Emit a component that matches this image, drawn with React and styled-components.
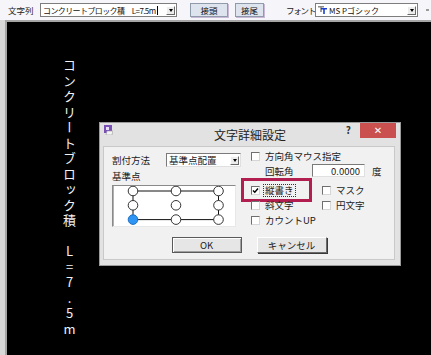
import React from "react";
import styled, { createGlobalStyle } from "styled-components";

const GlobalStyle = createGlobalStyle`
  html, body {
    margin: 0;
    padding: 0;
    background: #000;
  }
  body {
    width: 431px;
    height: 355px;
    overflow: hidden;
    font-family: "Noto Sans CJK JP", "Noto Sans", sans-serif;
  }
  #root {
    width: 431px;
    height: 355px;
  }
`;

const Page = styled.div`
  width: 431px;
  height: 355px;
  display: flex;
  flex-direction: column;
`;

// top toolbar
const Toolbar = styled.div`
  height: 20px;
  flex: none;
  display: flex;
  align-items: center;
  padding-left: 8px;
  background: #f6f6fa;
  color: #222;
  font-size: 8.5px;
`;

const ToolLabel = styled.span`
  width: ${(p) => p.$w}px;
  margin-left: ${(p) => p.$ml || 0}px;
  flex: none;
  white-space: nowrap;
  line-height: 14px;
  letter-spacing: ${(p) => p.$ls || 0}px;
`;

const Combo = styled.div`
  width: ${(p) => p.$w}px;
  height: 14px;
  flex: none;
  box-sizing: border-box;
  display: flex;
  align-items: center;
  padding-left: 2px;
  background: #fff;
  border: 1px solid #7d7d7d;
  font-size: 8px;
  letter-spacing: ${(p) => p.$ls || 0}px;
  color: #111;
  white-space: nowrap;
  overflow: hidden;
`;

const Caret = styled.span`
  width: 1px;
  height: 9px;
  background: #000;
  margin-left: 1px;
`;

const ArrowBtn = styled.span`
  margin-left: auto;
  margin-right: 1px;
  width: 9px;
  height: 9px;
  flex: none;
  box-sizing: border-box;
  display: flex;
  align-items: center;
  justify-content: center;
  background: #ececec;
  border: 1px solid;
  border-color: #fff #6a6a6a #6a6a6a #fff;

  &::after {
    content: "";
    border-left: 2.5px solid transparent;
    border-right: 2.5px solid transparent;
    border-top: 3px solid #000;
  }
`;

const ToolButton = styled.button`
  width: ${(p) => p.$w}px;
  height: 14px;
  margin-left: ${(p) => p.$ml}px;
  flex: none;
  padding: 0;
  background: #dde4ee;
  border: 1px solid #8f9aab;
  box-shadow: 1px 1px 0 #c9b9d6;
  font-family: inherit;
  font-size: 8.5px;
  color: #111;
  line-height: 12px;
`;

const FontIcon = styled.svg`
  width: 9px;
  height: 8px;
  flex: none;
  margin-right: 2px;
`;

const EdgeMark = styled.span`
  margin-left: 8px;
  width: 3px;
  height: 2px;
  background: #9a9a9a;
`;

// drawing area
const Workspace = styled.div`
  flex: 1;
  display: flex;
`;

const LeftStrip = styled.div`
  width: 5px;
  flex: none;
  background: #d8d8d8;
  border-right: 2px solid #a6a6a6;
`;

const Board = styled.div`
  flex: 1;
  position: relative;
  background: #000;
  border-top: 2px solid #a6a6a6;
  overflow: hidden;
`;

const VerticalText = styled.div`
  position: absolute;
  left: 55px;
  top: 37px;
  writing-mode: vertical-rl;
  text-orientation: upright;
  font-size: 13px;
  line-height: 14px;
  letter-spacing: 2.5px;
  color: #f2f2f2;
  white-space: nowrap;
`;

// dialog window
const Dialog = styled.div`
  position: absolute;
  left: 92px;
  top: 100px;
  width: 302px;
  height: 144px;
  box-sizing: border-box;
  display: flex;
  flex-direction: column;
  background: #e2e2e2;
  border: 1px solid #9b9b9b;
  color: #1a1a1a;
`;

const TitleBar = styled.div`
  height: 23px;
  flex: none;
  display: grid;
  grid-template-columns: 1fr auto 1fr;
  align-items: start;
`;

const AppIcon = styled.svg`
  width: 9px;
  height: 10px;
  margin: 2px 0 0 4px;
`;

const Title = styled.div`
  font-size: 12px;
  line-height: 23px;
  color: #222;
`;

const TitleButtons = styled.div`
  display: flex;
  justify-content: flex-end;
  align-items: flex-start;
`;

const Help = styled.span`
  margin: 1px 9px 0 0;
  font-size: 10px;
  font-weight: bold;
  line-height: 12px;
  color: #333;
`;

const CloseBtn = styled.div`
  width: 36px;
  height: 15px;
  margin-right: 4px;
  display: flex;
  align-items: center;
  justify-content: center;
  background: #c9504f;
  color: #fff;
  font-size: 10px;
  font-family: "DejaVu Sans", sans-serif;
`;

const Panel = styled.div`
  flex: 1;
  margin: 0 5px 5px 3px;
  padding: 6px 0 0 8px;
  box-sizing: border-box;
  background: #f1f1f1;
  border: 1px solid #c9c9c9;
  font-size: 9.5px;
  display: flex;
  flex-direction: column;
`;

const Columns = styled.div`
  display: flex;
  gap: 9px;
`;

const LeftCol = styled.div`
  width: 130px;
  display: flex;
  flex-direction: column;
`;

const FieldRow = styled.div`
  height: 14px;
  display: flex;
  align-items: center;
`;

const FieldLabel = styled.span`
  width: ${(p) => p.$w}px;
  flex: none;
  white-space: nowrap;
`;

const Select = styled.div`
  width: 75px;
  height: 14px;
  box-sizing: border-box;
  display: flex;
  align-items: center;
  padding-left: 2px;
  background: #fff;
  border: 1px solid;
  border-color: #7a7a7a #e0e0e0 #e0e0e0 #7a7a7a;
  white-space: nowrap;
`;

const GroupLabel = styled.div`
  margin-top: 4px;
  height: 10px;
  line-height: 10px;
`;

const PointBox = styled.div`
  margin-top: 4px;
  width: 124px;
  height: 42px;
  box-sizing: border-box;
  background: #fff;
  border: 1px solid;
  border-color: #8a8a8a #e8e8e8 #e8e8e8 #8a8a8a;
  box-shadow: inset 1px 0 0 #b0b0b0;
  display: flex;
`;

const RightCol = styled.div`
  display: flex;
  flex-direction: column;
  margin-top: -3px;
`;

const CheckItem = styled.label`
  position: relative;
  height: ${(p) => p.$h || 12}px;
  display: flex;
  align-items: center;
  gap: 3px;
  white-space: nowrap;
`;

const Box = styled.span`
  width: 9px;
  height: 9px;
  flex: none;
  box-sizing: border-box;
  background: #fff;
  border: 1px solid;
  border-color: #6f6f6f #d6d6d6 #d6d6d6 #6f6f6f;
  display: flex;
  align-items: center;
  justify-content: center;
`;

const CheckText = styled.span`
  padding: 0 1px;
  line-height: 11px;
  border: 1px ${(p) => (p.$focus ? "dotted #333" : "solid transparent")};
`;

const Marker = styled.span`
  position: absolute;
  left: -10px;
  top: -5.5px;
  width: 71px;
  height: 24px;
  box-sizing: border-box;
  border: 3px solid #b21e4f;
  pointer-events: none;
`;

const AngleRow = styled.div`
  margin-top: 2px;
  height: 13px;
  padding-left: 14px;
  display: flex;
  align-items: center;
`;

const NumInput = styled.div`
  width: 53px;
  height: 13px;
  box-sizing: border-box;
  padding-right: 4px;
  display: flex;
  align-items: center;
  justify-content: flex-end;
  background: #fff;
  border: 1px solid;
  border-color: #7a7a7a #e0e0e0 #e0e0e0 #7a7a7a;
`;

const Unit = styled.span`
  margin-left: 7px;
`;

const OptionGrid = styled.div`
  margin-top: 6px;
  display: grid;
  grid-template-columns: 71px auto;
  grid-auto-rows: 15px;
  align-items: center;
`;

const ButtonRow = styled.div`
  margin-top: 9px;
  display: flex;
  justify-content: center;
  gap: 15px;
  padding-right: 8px;
`;

const DlgButton = styled.button`
  width: 70px;
  height: 16px;
  padding: 0;
  box-sizing: border-box;
  background: #e6e6e6;
  border: 1px solid;
  border-color: ${(p) =>
    p.$default ? "#5a5a5a" : "#ffffff #6a6a6a #6a6a6a #ffffff"};
  box-shadow: ${(p) =>
    p.$default ? "inset 1px 1px 0 #fff, inset -1px -1px 0 #a0a0a0" : "1px 1px 0 #3a3a3a"};
  font-family: inherit;
  font-size: 9.5px;
  color: #1a1a1a;
  line-height: 14px;
`;

const Check = ({ label, checked, focus, children }) => (
  <CheckItem $h={focus !== undefined || checked !== undefined ? 15 : 12}>
    <Box>
      {checked && (
        <svg width="7" height="7" viewBox="0 0 7 7">
          <polyline points="1,3.5 2.8,5.3 6,1.5" fill="none" stroke="#000" strokeWidth="1.4" />
        </svg>
      )}
    </Box>
    <CheckText $focus={focus}>{label}</CheckText>
    {children}
  </CheckItem>
);

const cols = [20, 63, 105.5];
const rows = [5, 19.3, 33.6];

const BasePoints = () => (
  <svg width="122" height="40" viewBox="0 0 122 40">
    <rect x="20" y="5" width="85.5" height="28.6" fill="none" stroke="#111" strokeWidth="1" />
    {rows.map((y, r) =>
      cols.map((x, c) => {
        const on = r === 2 && c === 0;
        return (
          <circle
            key={`${r}-${c}`}
            cx={x}
            cy={y}
            r="4.8"
            fill={on ? "#2f95f5" : "#fff"}
            stroke={on ? "#1f6fc2" : "#333"}
            strokeWidth="1"
          />
        );
      })
    )}
  </svg>
);

const App = () => {
  return (
    <Page>
      <GlobalStyle />
      <Toolbar>
        <ToolLabel $w={32}>文字列</ToolLabel>
        <Combo $w={137} $ls={-0.6}>
          コンクリートブロック積　L=7.5m
          <Caret />
          <ArrowBtn />
        </Combo>
        <ToolButton $w={38} $ml={13}>接頭</ToolButton>
        <ToolButton $w={29} $ml={7}>接尾</ToolButton>
        <ToolLabel $w={29} $ml={22} $ls={-1.2}>フォント</ToolLabel>
        <Combo $w={103}>
          <FontIcon viewBox="0 0 9 8">
            <rect x="0" y="0" width="6" height="1.5" fill="#8a8a8a" />
            <rect x="2.2" y="0" width="1.6" height="6" fill="#8a8a8a" />
            <rect x="3" y="2" width="6" height="1.5" fill="#1c3fd0" />
            <rect x="5.2" y="2" width="1.6" height="6" fill="#1c3fd0" />
          </FontIcon>
          MS Pゴシック
          <ArrowBtn />
        </Combo>
        <EdgeMark />
      </Toolbar>

      <Workspace>
        <LeftStrip />
        <Board>
          <VerticalText>コンクリートブロック積　L=7.5m</VerticalText>

          <Dialog>
            <TitleBar>
              <AppIcon viewBox="0 0 9 10">
                <rect x="0" y="0" width="8" height="8" fill="#7b4fb8" />
                <rect x="2" y="2" width="3" height="3" fill="#e8e0f5" />
                <path d="M3 6 L9 6 L8 10 L2 10 Z" fill="#f4f4f4" stroke="#9a9a9a" strokeWidth="0.6" />
              </AppIcon>
              <Title>文字詳細設定</Title>
              <TitleButtons>
                <Help>?</Help>
                <CloseBtn>✕</CloseBtn>
              </TitleButtons>
            </TitleBar>

            <Panel>
              <Columns>
                <LeftCol>
                  <FieldRow>
                    <FieldLabel $w={54}>割付方法</FieldLabel>
                    <Select>
                      基準点配置
                      <ArrowBtn />
                    </Select>
                  </FieldRow>
                  <GroupLabel>基準点</GroupLabel>
                  <PointBox>
                    <BasePoints />
                  </PointBox>
                </LeftCol>

                <RightCol>
                  <Check label="方向角マウス指定" />
                  <AngleRow>
                    <FieldLabel $w={47}>回転角</FieldLabel>
                    <NumInput>0.0000</NumInput>
                    <Unit>度</Unit>
                  </AngleRow>
                  <OptionGrid>
                    <Check label="縦書き" checked focus>
                      <Marker />
                    </Check>
                    <Check label="マスク" checked={false} />
                    <Check label="斜文字" checked={false} />
                    <Check label="円文字" checked={false} />
                    <Check label="カウントUP" checked={false} />
                  </OptionGrid>
                </RightCol>
              </Columns>

              <ButtonRow>
                <DlgButton $default>OK</DlgButton>
                <DlgButton>キャンセル</DlgButton>
              </ButtonRow>
            </Panel>
          </Dialog>
        </Board>
      </Workspace>
    </Page>
  );
};

export default App;
